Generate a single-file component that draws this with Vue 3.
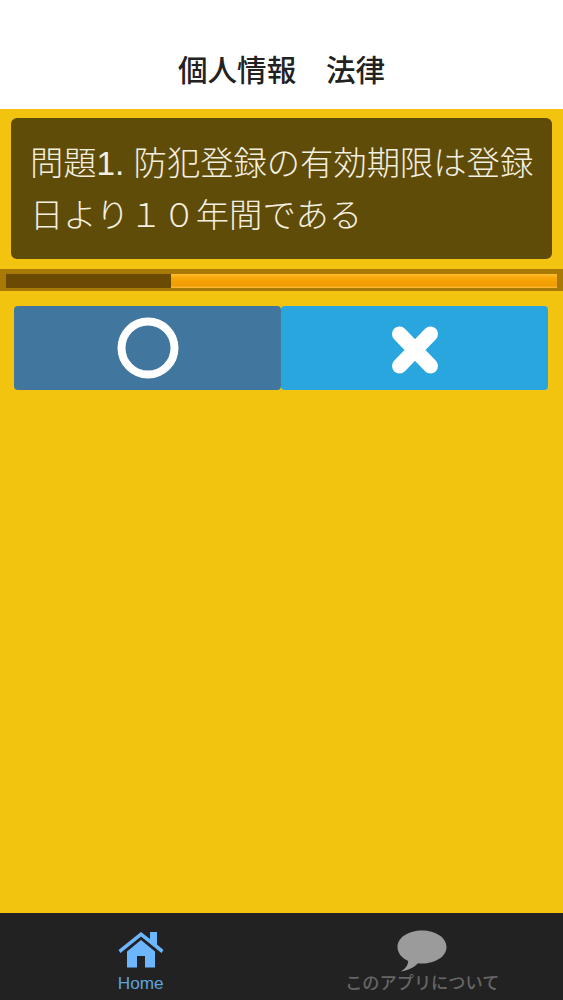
<script setup>
const question = '問題1. 防犯登録の有効期限は登録日より１０年間である'
const progress = 30
</script>

<template>
  <div class="app">
    <header class="nav">個人情報　法律</header>
    <main class="content">
      <section class="question">{{ question }}</section>
      <div class="track">
        <div class="bar">
          <div class="used" :style="{ width: progress + '%' }"></div>
          <div class="rest"></div>
        </div>
      </div>
      <div class="answers">
        <button class="answer yes" aria-label="まる">
          <svg width="62" height="62" viewBox="0 0 62 62"><circle cx="31" cy="31" r="26.5" fill="none" stroke="#fff" stroke-width="8"/></svg>
        </button>
        <button class="answer no" aria-label="ばつ">
          <svg class="cross" width="48" height="50" viewBox="0 0 48 50"><path d="M8.5 9 L39.5 41 M39.5 9 L8.5 41" fill="none" stroke="#fff" stroke-width="15" stroke-linecap="round"/></svg>
        </button>
      </div>
    </main>
    <nav class="tabs">
      <div class="tab active">
        <svg width="46" height="38" viewBox="0 0 46 38">
          <path fill="#6cb6ff" d="M23 1 L32 8 V1 H39 V13.5 L45.5 19 L43.5 22 L23 5.5 L2.5 22 L0.5 19 Z"/>
          <path fill="#6cb6ff" d="M23 9 L37 20.5 V36.5 H27 V25 H19 V36.5 H9 V20.5 Z"/>
        </svg>
        <span class="home-label">Home</span>
      </div>
      <div class="tab">
        <svg width="50" height="44" viewBox="0 0 50 44">
          <path fill="#9b9b9b" d="M25 0.5 C38.5 0.5 49.5 7.5 49.5 17 C49.5 26.5 38.5 33.5 25 33.5 C23.5 33.5 22.5 33.5 21 33.3 C17 37.5 11 40.5 4 41.5 C8.5 38.5 11 35.5 11.2 31 C4.8 28 0.5 23 0.5 17 C0.5 7.5 11.5 0.5 25 0.5 Z"/>
        </svg>
        <span class="about-label">このアプリについて</span>
      </div>
    </nav>
  </div>
</template>

<style scoped>
.app {
  width: 563px;
  height: 1000px;
  display: flex;
  flex-direction: column;
  font-family: "Liberation Sans", "Noto Sans CJK JP", sans-serif;
  overflow: hidden;
}
.nav {
  height: 109px;
  box-sizing: border-box;
  padding-top: 51px;
  background: #fff;
  color: #222;
  font-size: 29.6px;
  font-weight: 500;
  line-height: 40px;
  text-align: center;
}
.content {
  flex: 1;
  background: #f2c30f;
  padding-top: 9px;
}
.question {
  margin: 0 11px;
  height: 141px;
  box-sizing: border-box;
  padding: 20px 14px 0 19px;
  border-radius: 6px;
  background: #5f4c08;
  color: #f4f0e0;
  font-size: 33.3px;
  font-weight: 300;
  line-height: 52px;
}
.track {
  margin-top: 10px;
  height: 22px;
  box-sizing: border-box;
  padding: 5px 6px 3px;
  background: #a87a05;
}
.bar {
  display: flex;
  height: 14px;
}
.used {
  background: #6b4a03;
}
.rest {
  flex: 1;
  background: linear-gradient(#ffbe2e, #f6a608 30%, #f09c04 85%, #ffc040);
}
.answers {
  display: flex;
  margin: 15px 15px 0 14px;
}
.answer {
  flex: 1;
  height: 84px;
  border: 0;
  padding: 0;
  border-radius: 4px;
  display: flex;
  align-items: center;
  justify-content: center;
}
.yes {
  background: #41779f;
}
.no {
  background: #29a6dd;
}
.cross {
  margin-top: 4px;
}
.tabs {
  height: 87px;
  display: flex;
  background: #222222;
}
.tab {
  flex: 1;
  display: flex;
  flex-direction: column;
  align-items: center;
  justify-content: flex-end;
  color: #666;
  font-size: 17.2px;
  line-height: 20px;
  padding-bottom: 7px;
}
.tab.active {
  color: #5ea2dc;
}
.tab svg {
  display: block;
}
.home-label {
  margin-top: 4px;
}
.about-label {
  margin-top: -1px;
  font-weight: 500;
}
</style>

<style>
body { margin: 0; background: #f2c30f; }
</style>
